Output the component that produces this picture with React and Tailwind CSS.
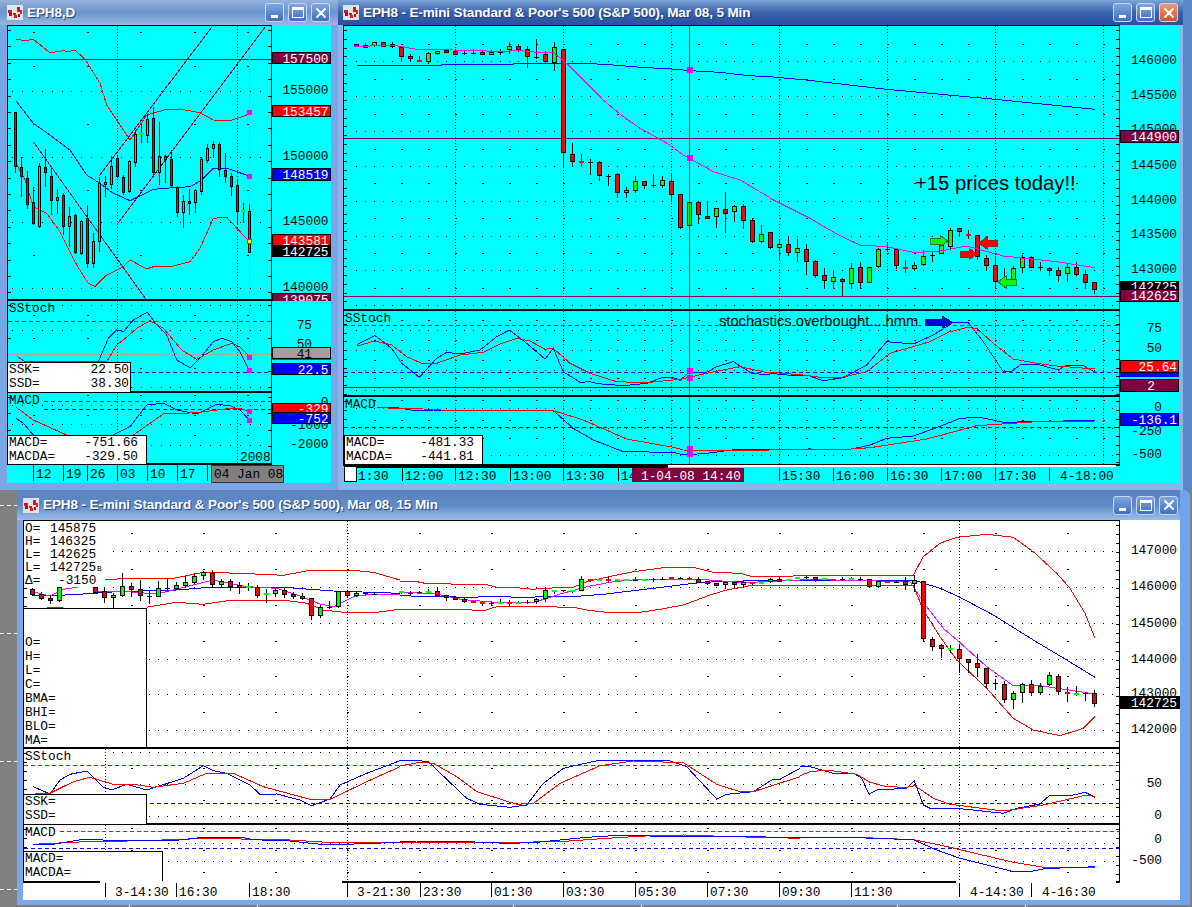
import React from "react";
import { X } from "lucide-react";

const MONO = "'Liberation Mono', monospace";
const SANS = "'Liberation Sans', Arial, sans-serif";
const BURG = "#800040";
const RED = "#ff0000";
const BLUE = "#0000ff";
const PINK = "#ff00ff";

const pts = (ox, oy, a) => {
  const out = [];
  for (let i = 0; i < a.length; i += 2) out.push(`${(ox + a[i] / 3).toFixed(1)},${(oy + a[i + 1] / 3).toFixed(1)}`);
  return out.join(" ");
};
const L = ({ c, p }) => <polyline points={p} fill="none" stroke={c} strokeWidth="1" />;
const T = ({ x, y, children, s = 12.8, c = "#000", a = "start", f = MONO }) => (
  <text x={x} y={y} fontFamily={f} fontSize={s} fill={c} textAnchor={a}>{children}</text>
);
const PB = ({ x, w, y, h, bg, c = "#fff", r, t }) => (
  <g>
    <rect x={x + 0.5} y={y + 0.5} width={w - 1} height={h - 1} fill={bg} stroke="#000" />
    <T x={r} y={y + h / 2 + 4.5} c={c} a="end">{t}</T>
  </g>
);

function Grid({ x0, x1, y0, y1, rows = [], dashes = [], dashStep = 27, dashOx = 0, step = 9, ox = 0, vs = [], tick = 0 }) {
  let d = "";
  rows.forEach((y) => {
    for (let x = ox || x0 + 4; x < x1 - 3; x += step) d += `M${x} ${y + 0.5}h1`;
  });
  dashes.forEach((y) => {
    for (let x = dashOx; x < x1 - 3; x += dashStep) if (x >= x0) d += `M${Math.round(x)} ${y + 0.5}h2`;
  });
  vs.forEach((x) => {
    for (let y = y0; y < y1; y += 3) d += `M${x + 0.5} ${y}v1`;
  });
  if (tick) {
    for (let y = y0 + 4; y < y1; y += tick) {
      const r = Math.round(y);
      d += `M${x0} ${r + 0.5}h3M${x1 - 3} ${r + 0.5}h3`;
    }
  }
  return <path d={d} stroke="#000" strokeWidth="1" fill="none" />;
}

function Candles({ ox, oy, data, w = 5 }) {
  const hw = Math.floor(w / 2);
  return (
    <g>
      {data.map((k, i) => {
        const kind = k[k.length - 1];
        const X = Math.round(ox + k[0] / 3);
        const Y = (v) => Math.round(oy + v / 3);
        if (kind === "p") {
          return (
            <g key={i}>
              <rect x={X} y={Y(k[1])} width="1" height={Y(k[3]) - Y(k[1])} fill="#000" />
              <rect x={X - 2} y={Y(k[2])} width="5" height="1" fill="#000" />
            </g>
          );
        }
        if (kind === "R" || kind === "G") {
          return (
            <g key={i}>
              <rect x={X} y={Y(k[1])} width="1" height={Y(k[3]) - Y(k[1])} fill="#000" />
              <rect x={X - 2} y={Y(k[2]) - 1} width="5" height="2" fill={kind === "R" ? RED : "#00ff00"} />
            </g>
          );
        }
        const fill = kind === "r" ? RED : kind === "g" ? "#00ff00" : "#666";
        return (
          <g key={i}>
            <rect x={X} y={Y(k[1])} width="1" height={Y(k[4]) - Y(k[1])} fill="#000" />
            <rect x={X - hw} y={Y(k[2])} width={w} height={Math.max(Y(k[3]) - Y(k[2]), 3)} fill="#000" />
            <rect x={X - hw + 1} y={Y(k[2]) + 1} width={w - 2} height={Math.max(Y(k[3]) - Y(k[2]) - 2, 1)} fill={fill} />
          </g>
        );
      })}
    </g>
  );
}

const Marker = ({ x, y, s = 6, c = PINK }) => <rect x={x - s / 2} y={y - s / 2} width={s} height={s} fill={c} />;

const Arrow = ({ x0, x1, y, c, e, right }) => {
  const hl = 8;
  const p = right
    ? `${x0},${y - 3} ${x1 - hl},${y - 3} ${x1 - hl},${y - 6} ${x1},${y} ${x1 - hl},${y + 6} ${x1 - hl},${y + 3} ${x0},${y + 3}`
    : `${x1},${y - 3} ${x0 + hl},${y - 3} ${x0 + hl},${y - 6} ${x0},${y} ${x0 + hl},${y + 6} ${x0 + hl},${y + 3} ${x1},${y + 3}`;
  return <polygon points={p} fill={c} stroke={e} strokeWidth="1" />;
};

function Pane({ x, y, w, h, axW, top, axis, children }) {
  const t = top ? 1 : 0;
  return (
    <div className="flex">
      <div className={top ? "border-x border-t border-b-2 border-black" : "border-x border-b-2 border-black"}>
        <svg className="block" width={w} height={h} viewBox={`${x} ${y} ${w} ${h}`} shapeRendering="crispEdges">
          {children}
        </svg>
      </div>
      <svg className="block" width={axW} height={h + t + 2} viewBox={`${x + w + 1} ${y - t} ${axW} ${h + t + 2}`} shapeRendering="crispEdges">
        {axis}
      </svg>
    </div>
  );
}

const AppIcon = () => (
  <svg width="16" height="15" viewBox="0 0 16 15" className="shrink-0 mr-[4px]" shapeRendering="crispEdges">
    <rect width="16" height="15" fill="#dfe3ea" />
    <rect x="1" y="5" width="4" height="3" fill="#d01818" />
    <rect x="2" y="8" width="3" height="3" fill="#a81010" />
    <rect x="6" y="8" width="3" height="2" fill="#d01818" />
    <rect x="7" y="10" width="3" height="3" fill="#e02020" />
    <rect x="10" y="2" width="3" height="5" fill="#d01818" />
    <rect x="13" y="5" width="2" height="4" fill="#e02020" />
    <rect x="11" y="9" width="2" height="3" fill="#a81010" />
  </svg>
);

const Btn = ({ className, children }) => (
  <div className={`w-[19px] h-[19px] rounded-[3px] border border-[#c8d8f4] flex items-center justify-center ${className}`}>{children}</div>
);

function Buttons({ close }) {
  const blue = "bg-linear-to-b from-[#7ea6e2] to-[#3f6fc0]";
  return (
    <div className="ml-auto flex gap-[4px]">
      <Btn className={blue}><span className="block w-[7px] h-[3px] bg-white mt-[8px]" /></Btn>
      <Btn className={blue}><span className="block w-[12px] h-[11px] border border-t-[3px] border-white" /></Btn>
      <Btn className={close}><X size={16} strokeWidth={3} color="#fff" /></Btn>
    </div>
  );
}

const Title = ({ className, text, close }) => (
  <div className={`flex items-center shrink-0 ${className}`}>
    <AppIcon />
    <span className="font-['Liberation_Sans',sans-serif] font-bold text-[13.5px] leading-none text-white tracking-[-0.12px] whitespace-nowrap [text-shadow:1px_1px_1px_#1a3a80]">{text}</span>
    <Buttons close={close} />
  </div>
);

const InfoRow = ({ a, b, pr }) => (
  <div className={`flex justify-between h-[14px] leading-[14px] ${pr}`}>
    <span>{a}</span>
    <span>{b}</span>
  </div>
);

const Box = ({ className, children }) => (
  <div className={`absolute bg-white border border-black border-b-0 font-['Liberation_Mono',monospace] text-[12.8px] text-black pl-[1px] ${className}`}>{children}</div>
);

/* ---------- daily window data ---------- */
const d1c = [
  [46,337,337,500,518,"r"],[64,470,502,530,590,"r"],[82,514,535,615,628,"r"],[100,560,606,673,675,"r"],[118,490,498,682,683,"g"],
  [136,448,502,520,560,"r"],[154,505,528,602,645,"r"],[172,568,592,602,642,"g"],[190,578,586,682,705,"r"],[208,620,648,680,740,"g"],
  [226,642,644,760,761,"r"],[244,660,663,763,765,"g"],[262,615,655,793,803,"r"],[280,700,724,793,803,"g"],[298,530,550,727,755,"g"],
  [316,528,546,554,590,"g"],[334,468,498,554,568,"g"],[352,468,475,530,535,"r"],[370,525,532,580,585,"r"],[388,480,484,577,580,"g"],
  [406,390,403,488,502,"g"],[424,375,403,430,"G"],[442,342,357,407,430,"g"],[460,320,354,518,530,"r"],[478,365,468,520,555,"g"],
  [496,465,469,480,550,"r"],[514,450,477,557,560,"r"],[532,558,560,640,650,"r"],[550,585,604,640,685,"g"],[568,568,603,610,645,"r"],
  [586,568,571,610,640,"g"],[604,472,478,575,585,"g"],[622,432,444,484,490,"g"],[640,424,432,446,475,"g"],[658,425,432,510,530,"r"],
  [676,460,510,530,548,"r"],[694,518,528,562,588,"r"],[712,538,555,635,675,"r"],[730,608,633,668,"G"],[748,612,634,758,760,"k"],
];

/* ---------- 5 min window data ---------- */
const m5a = [
  [49,132,133,140,142,"r"],[76,130,134,140,143,"r"],[103,126,127,139,140,"g"],[130,126,127,140,141,"r"],[157,127,133,140,143,"r"],
  [184,138,140,170,185,"r"],[211,163,168,176,185,"r"],[238,168,183,185,"R"],[265,155,160,185,192,"g"],[292,152,154,161,164,"g"],
  [319,148,149,155,156,"r"],[346,148,154,164,165,"r"],[373,150,160,165,"p"],[400,147,160,162,"p"],[427,150,155,160,163,"r"],
  [454,150,155,160,163,"g"],[481,148,156,165,"p"],[508,126,139,149,161,"g"],[535,133,139,150,155,"r"],[562,138,148,170,204,"r"],
  [589,117,170,178,"p"],[616,154,163,186,190,"r"],[643,126,142,190,212,"g"],[670,148,148,458,500,"r"],[697,430,463,485,500,"r"],
  [724,462,486,498,"R"],[751,477,487,524,"p"],[778,484,487,529,543,"r"],[805,522,527,558,"p"],[832,519,523,578,594,"r"],
  [859,562,571,578,594,"g"],[886,528,544,572,579,"g"],[913,544,544,557,567,"r"],[940,522,556,563,"p"],[967,528,541,557,563,"g"],
  [994,519,544,584,600,"r"],[1021,583,583,683,686,"r"],[1048,607,607,677,678,"g"],[1075,604,607,644,672,"r"],[1102,603,648,656,657,"r"],
  [1129,625,625,650,683,"g"],[1156,576,628,641,698,"r"],[1183,614,618,635,666,"g"],[1210,613,619,662,687,"r"],[1237,655,661,725,728,"r"],
  [1264,675,703,725,730,"g"],[1291,697,697,745,747,"r"],
];
const m5b = [
  [28,718,733,745,782,"g"],[55,712,733,760,768,"r"],[82,718,745,760,785,"g"],[109,733,748,785,825,"r"],[136,780,784,828,834,"r"],
  [163,805,826,844,866,"r"],[190,810,832,845,866,"g"],[217,835,838,847,888,"r"],[244,790,805,853,866,"g"],[271,785,802,848,866,"r"],
  [298,802,802,848,849,"g"],[325,745,748,802,803,"g"],[352,728,747,755,"p"],[379,745,748,797,808,"r"],[406,780,804,818,"R"],
  [433,785,796,806,812,"g"],[460,750,767,796,798,"g"],[487,755,765,785,"p"],[514,735,735,762,763,"g"],[541,685,691,740,748,"g"],
  [568,683,685,697,707,"r"],[595,690,705,718,"R"],[622,705,706,770,780,"r"],[649,765,775,797,810,"r"],[676,768,796,845,860,"r"],
  [703,805,840,845,850,"g"],[730,797,805,845,856,"g"],[757,765,770,805,818,"g"],[784,768,770,803,805,"r"],[811,785,802,812,"p"],
  [838,802,803,812,828,"r"],[865,800,810,827,845,"r"],[892,790,802,823,845,"g"],[919,785,802,826,828,"r"],[946,810,823,848,868,"r"],
  [973,846,847,869,882,"r"],
];

/* ---------- 15 min window data ---------- */
const q1 = [
  [97,295,297,315,318,"r"],[124,305,313,326,330,"r"],[151,315,323,332,342,"r"],[178,290,290,332,335,"g"],[286,292,292,308,310,"r"],
  [313,292,304,325,338,"r"],[340,310,316,325,355,"g"],[367,250,289,317,320,"g"],[394,280,289,300,320,"r"],[421,270,297,319,332,"r"],
  [448,300,318,342,"p"],[475,273,295,320,322,"g"],[502,267,295,305,"p"],[529,275,285,296,300,"g"],[556,258,277,289,290,"g"],
  [583,250,257,280,282,"g"],[610,243,246,259,270,"g"],[637,240,248,284,295,"r"],[664,267,274,284,292,"g"],[691,268,274,290,303,"r"],
  [718,275,286,292,312,"r"],[745,280,290,302,"G"],[772,285,292,318,323,"r"],[799,298,311,338,"G"],[826,293,301,311,322,"g"],
  [853,294,301,314,325,"r"],[880,305,311,320,328,"r"],[907,310,319,326,330,"r"],[934,323,325,377,390,"r"],[961,345,352,379,385,"g"],
  [988,333,350,358,"p"],[1015,303,304,352,353,"g"],[1042,300,304,317,325,"r"],[1069,305,310,317,320,"g"],[1096,307,310,316,"p"],[1123,305,311,316,"p"],
];
const q2 = [
  [4,212,217,222,"G"],[31,212,218,228,"p"],[58,212,216,222,"p"],[85,208,215,220,"G"],[112,205,214,229,230,"r"],[139,225,226,233,242,"r"],
  [166,228,231,238,240,"r"],[193,235,237,244,248,"r"],[220,240,245,250,"R"],[247,242,248,258,"R"],[274,243,250,258,"p"],[301,238,248,250,"G"],
  [328,240,248,257,"R"],[355,243,248,252,"G"],[382,240,245,252,"p"],[409,235,238,247,252,"g"],[436,205,211,238,245,"g"],[463,212,212,222,"G"],
  [490,210,211,215,"p"],[517,212,212,220,"G"],[544,168,178,212,214,"g"],[571,178,181,187,"R"],[598,178,180,182,"G"],[625,172,180,187,"R"],
  [652,178,180,182,"G"],[679,177,179,182,"G"],[706,170,179,183,"p"],[733,178,180,182,"G"],[760,173,176,185,"p"],[787,172,176,180,"p"],
  [814,170,173,176,"R"],[841,171,174,178,"p"],[868,172,176,179,"R"],[895,172,178,188,190,"r"],[922,183,184,190,195,"r"],[949,189,190,196,198,"r"],
  [976,185,187,193,207,"g"],[1003,185,187,193,205,"r"],[1030,185,187,193,200,"g"],[1057,186,188,195,"R"],[1084,186,188,192,"G"],
  [1111,175,178,187,190,"g"],[1138,170,178,185,187,"r"],[1165,178,180,184,"G"],[1192,172,174,176,"G"],
];
const q3 = [
  [18,168,172,178,"p"],[45,172,172,180,185,"r"],[72,174,176,179,"G"],[99,177,179,182,"R"],[126,170,178,182,"p"],[153,170,176,180,"G"],
  [180,172,178,182,"p"],[207,178,178,202,204,"r"],[234,184,184,200,205,"g"],[261,184,186,188,"R"],[288,180,185,190,"p"],[315,172,184,194,210,"r"],
  [342,165,181,193,215,"g"],[369,184,184,358,365,"r"],[396,352,358,380,392,"r"],[423,372,376,388,414,"r"],[450,376,386,398,"G"],
  [477,375,388,418,460,"r"],[504,418,418,428,458,"r"],[531,403,430,445,470,"r"],[558,443,445,491,505,"r"],[585,478,490,510,"p"],
  [612,483,493,541,550,"r"],[639,512,520,541,566,"g"],[666,488,493,520,550,"g"],[693,480,493,520,527,"r"],[720,490,499,520,525,"g"],
  [747,455,466,496,498,"g"],[774,462,469,517,522,"r"],[801,502,519,545,"R"],[828,498,521,527,"G"],[855,515,518,542,"p"],[882,510,520,553,560,"r"],
];

const ylab = (arr, r) => arr.map(([t, y]) => <T key={t} x={r} y={y + 4.5} a="end">{t}</T>);
const TimeTick = ({ x, y0, y1, t, ty, tx }) => (
  <g>
    <rect x={x} y={y0} width="1" height={y1 - y0} fill="#000" />
    <T x={tx ?? x + 3} y={ty}>{t}</T>
  </g>
);

function DailyWindow() {
  const x = 8, w = 263;
  return (
    <div className="absolute left-0 top-0 w-[338px] h-[490px] flex flex-col rounded-t-[6px] bg-[#7aa6e6]">
      <Title className="h-[25px] pl-[7px] pr-[8px] bg-linear-to-b from-[#94b2dc] via-[#6b93cc] to-[#9ab8e0]" text="EPH8,D" close="bg-linear-to-b from-[#7ea6e2] to-[#3f6fc0]" />
      <div className="ml-[7px] w-[324px] h-[458px] bg-[#00ffff] flex flex-col">
        <Pane x={x} y={26} w={w} h={273} axW={59} top axis={
          <g>
            {ylab([["155000", 89], ["150000", 155], ["145000", 220], ["140000", 286]], 328.5)}
            <PB x={272} w={59} y={52} h={12} bg={BURG} r={328.5} t="157500" />
            <PB x={272} w={59} y={105} h={12} bg={RED} r={328.5} t="153457" />
            <PB x={272} w={59} y={168} h={13} bg={BLUE} r={328.5} t="148519" />
            <PB x={272} w={59} y={234} h={12} bg={RED} r={328.5} t="143581" />
            <PB x={272} w={59} y={245} h={12} bg="#000" r={328.5} t="142725" />
            <PB x={272} w={59} y={293} h={12} bg={BURG} r={328.5} t="139075" />
          </g>
        }>
          <Grid x0={x} x1={x + w} y0={26} y1={299} rows={[91, 157, 222, 288]} dashes={[32, 66, 124, 190, 255]} dashStep={53.5} dashOx={33} step={9.9} ox={12} vs={[117, 237]} tick={16.4} />
          <rect x={x} y={59} width={w} height="1" fill={BURG} />
          <rect x="249" y="26" width="1" height="273" fill="#d08a9c" />
          <L c={BURG} p={pts(0, 0, [100, 425, 437, 897])} />
          <L c={BURG} p={pts(0, 0, [298, 527, 635, 82])} />
          <L c={BURG} p={pts(0, 0, [352, 672, 795, 82])} />
          <L c={RED} p={pts(0, 0, [48,118,75,122,100,118,150,158,190,152,205,155,225,150,255,178,300,250,320,315,350,360,390,420,440,345,500,328,540,327,600,338,640,360,690,362,740,345,748,338])} />
          <L c={BLUE} p={pts(0, 0, [48,303,100,370,150,405,210,450,260,525,300,550,340,580,390,602,460,568,520,563,570,560,605,540,640,505,680,505,748,528])} />
          <L c={RED} p={pts(0, 0, [48,490,75,540,100,620,140,640,180,695,230,795,265,850,285,860,320,825,370,800,390,780,440,807,460,800,520,798,570,785,600,745,640,655,680,652,748,725])} />
          <Candles ox={0} oy={0} data={d1c} w={3} />
          <Marker x={249} y={112} s={5} />
          <Marker x={249} y={176} s={5} />
          <Marker x={249} y={241} s={5} />
          <Marker x={249} y={241} s={3} c="#ffff00" />
        </Pane>
        <Pane x={x} y={301} w={w} h={90} axW={59} axis={
          <g>
            {ylab([["75", 324], ["50", 343]], 312)}
            <PB x={272} w={59} y={347} h={12} bg="#a0a0a0" c="#000" r={312} t="41" />
            <rect x="272" y="359" width="59" height="1" fill={RED} />
            <PB x={272} w={59} y={363} h={12} bg={BLUE} r={328.5} t="22.5" />
          </g>
        }>
          <Grid x0={x} x1={x + w} y0={301} y1={391} rows={[305, 330, 387]} dashes={[315, 338, 368]} dashStep={53.5} dashOx={33} step={9.9} ox={12} vs={[117, 237]} tick={16.4} />
          <rect x={x} y={354} width={w} height="1" fill="#a8a8a8" />
          <line x1={x} x2={x + w} y1="321.5" y2="321.5" stroke={RED} strokeDasharray="4 3" />
          <line x1="131" x2={x + w} y1="372.5" y2="372.5" stroke={BLUE} strokeDasharray="4 3" />
          <rect x="249" y="301" width="1" height="90" fill="#d08a9c" />
          <L c={BLUE} p={pts(0, 290, [295,215,325,145,350,120,370,125,400,90,442,67,470,105,500,135,530,210,570,233,600,205,640,155,665,145,695,155,720,185,748,242])} />
          <L c={RED} p={pts(0, 290, [50,198,75,215,320,215,350,165,370,150,410,115,450,92,490,115,545,180,590,208,640,180,695,160,720,170,748,200])} />
          <T x={9} y={312}>SStoch</T>
          <Marker x={249} y={357} s={5} />
          <Marker x={249} y={370} s={5} />
        </Pane>
        <Pane x={x} y={393} w={w} h={70} axW={59} axis={
          <g>
            {ylab([["0", 401], ["-1000", 424], ["-2000", 443]], 328.5)}
            <PB x={272} w={59} y={403} h={10} bg={RED} r={328.5} t="-329" />
            <PB x={272} w={59} y={412} h={12} bg={BLUE} r={328.5} t="-752" />
          </g>
        }>
          <Grid x0={x} x1={x + w} y0={393} y1={463} rows={[405, 424, 445]} dashes={[395, 415, 435]} dashStep={53.5} dashOx={33} step={9.9} ox={12} vs={[117, 237]} tick={16.4} />
          <line x1="44" x2={x + w} y1="401.5" y2="401.5" stroke={RED} strokeDasharray="4 3" />
          <line x1="44" x2={x + w} y1="409.5" y2="409.5" stroke={BLUE} strokeDasharray="4 3" />
          <rect x="249" y="393" width="1" height="70" fill="#d08a9c" />
          <L c={BLUE} p={pts(0, 290, [48,385,70,400,100,435,340,435,390,410,440,345,490,340,530,360,590,372,650,343,690,347,720,360,748,390])} />
          <L c={RED} p={pts(0, 290, [48,352,100,390,200,435,400,435,490,372,590,368,690,355,720,355,748,365])} />
          <T x={9} y={404}>MACD</T>
          <T x={240} y={461}>2008</T>
          <Marker x={249} y={411} s={5} />
          <Marker x={249} y={420} s={5} />
        </Pane>
        <svg className="block" width="324" height="18" viewBox="7 465 324 18" shapeRendering="crispEdges">
          {[[33,"12"],[63,"19"],[87,"26"],[117,"03"],[147,"10"],[177,"17"]].map(([tx, t]) => (
            <TimeTick key={t} x={tx} y0={465} y1={481} t={t} ty={477.5} />
          ))}
          <rect x="207" y="465" width="1" height="16" fill="#000" />
          <rect x="211.5" y="465.5" width="72" height="17" fill="#808080" stroke="#333" />
          <T x={214} y={477.5}>04 Jan 08</T>
        </svg>
      </div>
      <Box className="left-[7px] top-[362px] w-[124px] h-[30px]">
        <InfoRow a="SSK=" b="22.50" pr="pr-[1px]" />
        <InfoRow a="SSD=" b="38.30" pr="pr-[1px]" />
      </Box>
      <Box className="left-[7px] top-[435px] w-[140px] h-[29px]">
        <InfoRow a="MACD=" b="-751.66" pr="pr-[8px]" />
        <InfoRow a="MACDA=" b="-329.50" pr="pr-[8px]" />
      </Box>
    </div>
  );
}

function FiveMinWindow() {
  const x = 344, w = 775;
  const vs = [455, 563, 671, 779, 887, 995, 1103];
  return (
    <div className="absolute left-[338px] top-0 w-[854px] h-[490px] flex flex-col bg-[#8db4ea] border-r-[9px] border-r-[#5b86c8]">
      <Title className="h-[25px] pl-[5px] pr-[5px] bg-linear-to-b from-[#7ba4d8] via-[#3a63ad] to-[#2a4fa0]" text="EPH8 - E-mini Standard & Poor's 500 (S&P 500), Mar 08, 5 Min" close="bg-linear-to-b from-[#f09a70] to-[#d05028]" />
      <div className="ml-[5px] w-[836px] h-[458px] bg-[#00ffff] flex flex-col">
        <Pane x={x} y={26} w={w} h={283} axW={59} top axis={
          <g>
            {ylab([["146000", 59], ["145500", 94], ["145000", 128], ["144500", 164], ["144000", 199], ["143500", 233], ["143000", 268]], 1177)}
            <PB x={1120} w={59} y={130} h={13} bg={BURG} r={1177} t="144900" />
            <PB x={1120} w={59} y={281} h={10} bg="#000" r={1177} t="142725" />
            <PB x={1120} w={59} y={289} h={13} bg={BURG} r={1177} t="142625" />
          </g>
        }>
          <Grid x0={x} x1={x + w} y0={26} y1={309} rows={[61, 96, 131, 166, 201, 236, 270, 305]} dashes={[44, 79, 114, 149, 183, 218, 253, 288]} dashStep={27} dashOx={374} step={9} ox={356} vs={vs} tick={8.75} />
          <rect x={x} y={138} width={w} height="1" fill={BURG} />
          <rect x={x} y={296} width={w} height="1" fill={BURG} />
          <L c={BLUE} p={pts(340, 0, [52,196,305,196,305,193,520,193,520,190,770,192,820,195,900,202,1010,208,1050,212,1140,217,1225,227,1290,230])} />
          <L c={BLUE} p={pts(770, 0, [0,230,108,240,350,268,675,298,975,328])} />
          <Candles ox={340} oy={0} data={m5a} />
          <Candles ox={770} oy={0} data={m5b} />
          <L c={PINK} p={pts(340, 0, [42,140,160,135,195,142,230,148,340,150,415,152,495,155,525,150,600,158,640,158,680,190,740,250,790,300,850,350,900,385,990,435,1030,465,1048,475,1120,515,1200,540,1290,593])} />
          <L c={PINK} p={pts(770, 0, [0,595,120,655,170,685,220,712,270,735,350,740,430,757,500,755,590,738,700,768,860,785,975,803])} />
          <Marker x={689.5} y={70} />
          <Marker x={689.5} y={158} />
          <rect x="689" y="26" width="1" height="283" fill={BURG} />
          <Arrow x0={930} x1={948} y={241} c="#00ff00" e="#1a7a30" right />
          <Arrow x0={979} x1={997} y={243} c={RED} e="#a02020" />
          <Arrow x0={960} x1={977} y={254} c={RED} e="#a02020" right />
          <Arrow x0={998} x1={1016} y={282} c="#00ff00" e="#1a7a30" />
          <T x={915} y={190} s={20.3} f={SANS}>+15 prices today!!</T>
        </Pane>
        <Pane x={x} y={311} w={w} h={84} axW={59} axis={
          <g>
            {ylab([["75", 327], ["50", 347]], 1162)}
            <rect x="1120" y="372" width="59" height="5" fill={BLUE} />
            <PB x={1120} w={59} y={360} h={13} bg={RED} r={1177} t="25.64" />
            <PB x={1120} w={59} y={379} h={13} bg={BURG} r={1155} t="2" />
          </g>
        }>
          <Grid x0={x} x1={x + w} y0={311} y1={395} rows={[330, 350, 370, 390]} dashes={[320, 340, 360, 378]} dashStep={27} dashOx={374} step={9} ox={356} vs={vs} tick={8.75} />
          <line x1={x} x2={x + w} y1="325.5" y2="325.5" stroke={RED} strokeDasharray="4 3" />
          <line x1={x} x2={x + w} y1="372.5" y2="372.5" stroke={BLUE} strokeDasharray="4 3" />
          <rect x={x} y={387} width={w} height="1" fill={BURG} />
          <L c={BLUE} p={pts(340, 295, [52,148,105,122,155,160,185,205,238,247,290,190,320,172,360,177,420,165,470,125,508,105,560,145,615,192,640,160,670,230,720,262,750,260,775,266,850,272,920,265,965,248,995,246,1020,256,1048,232,1100,232,1130,215,1180,200,1235,235,1290,240])} />
          <L c={RED} p={pts(340, 295, [52,153,105,138,155,150,200,185,250,207,290,205,360,180,430,172,480,147,530,130,570,138,615,163,640,160,690,205,750,235,830,260,920,263,1020,253,1100,235,1200,215,1290,235])} />
          <L c={BLUE} p={pts(770, 295, [0,235,50,240,110,240,160,257,220,248,290,210,350,140,430,147,490,120,550,82,595,83,640,140,700,230,725,228,755,207,810,210,865,225,890,210,940,212,975,232])} />
          <L c={RED} p={pts(770, 295, [0,232,100,240,160,248,210,248,290,230,360,175,480,140,540,110,590,98,620,100,670,145,730,192,800,205,860,213,975,222])} />
          <Marker x={689.5} y={371} />
          <Marker x={689.5} y={378} />
          <rect x="689" y="311" width="1" height="84" fill={BURG} />
          <T x={345} y={322}>SStoch</T>
          <T x={719} y={326} s={14.7} f={SANS}>stochastics overbought....hmm</T>
          <polygon points="925,319 942,319 942,316 952,322 942,328 942,325 925,325" fill="#0000d0" stroke="#00008a" />
        </Pane>
        <Pane x={x} y={397} w={w} h={67} axW={59} axis={
          <g>
            {ylab([["0", 406], ["-250", 430], ["-500", 453]], 1162)}
            <PB x={1120} w={59} y={413} h={13} bg={BLUE} r={1177} t="-136.1" />
          </g>
        }>
          <Grid x0={x} x1={x + w} y0={397} y1={464} rows={[408, 428, 455]} dashes={[400, 420, 438]} dashStep={27} dashOx={374} step={9} ox={356} vs={vs} tick={8.75} />
          <line x1={x} x2={x + w} y1="427.5" y2="427.5" stroke={BLUE} strokeDasharray="4 3" />
          <L c={BLUE} p={pts(340, 295, [110,338,170,338,230,348,280,345,340,347,640,347,700,400,760,435,850,470,1000,472,1030,480,1100,475,1200,462,1290,462])} />
          <L c={RED} p={pts(340, 295, [110,338,250,342,340,347,640,347,730,375,860,432,1000,457,1030,465,1140,468,1290,465])} />
          <L c={BLUE} p={pts(770, 295, [0,463,120,462,230,465,300,450,350,430,430,423,500,398,570,370,630,367,700,382,975,376])} />
          <L c={RED} p={pts(770, 295, [0,463,200,465,300,458,470,432,620,392,800,380,975,378])} />
          <Marker x={689.5} y={449} />
          <Marker x={689.5} y={454} />
          <rect x="689" y="397" width="1" height="67" fill={BURG} />
          <T x={345} y={408}>MACD</T>
        </Pane>
        <svg className="block" width="836" height="17" viewBox="343 466 836 17" shapeRendering="crispEdges">
          <rect x="344" y="466" width="324" height="2" fill="#000" />
          {[[402,"12:00"],[455,"12:30"],[510,"13:00"],[563,"13:30"],[779,"15:30"],[833,"16:00"],[887,"16:30"],[941,"17:00"],[995,"17:30"]].map(([tx, t]) => (
            <TimeTick key={t} x={tx} y0={468} y1={481} t={t} ty={479.5} />
          ))}
          <rect x="618" y="468" width="1" height="13" fill="#000" />
          <T x={621} y={479.5}>14</T>
          <rect x="1049" y="468" width="1" height="13" fill="#000" />
          <T x={1060} y={479.5}>4-18:00</T>
          <T x={358} y={479.5}>1:30</T>
          <rect x="632" y="468" width="112" height="14" fill={BURG} />
          <T x={641} y={479.5} c="#fff">1-04-08 14:40</T>
          <rect x="344.5" y="466.5" width="12" height="15" fill="#fff" stroke="#000" />
        </svg>
      </div>
      <Box className="left-[6px] top-[435px] w-[139px] h-[29px]">
        <InfoRow a="MACD=" b="-481.33" pr="pr-[8px]" />
        <InfoRow a="MACDA=" b="-441.81" pr="pr-[8px]" />
      </Box>
      <div className="absolute left-[330px] top-[465px] w-[448px] h-[2px] bg-white" />
    </div>
  );
}

function FifteenMinWindow() {
  const x = 24, w = 1095;
  return (
    <div className="absolute left-[17px] top-[490px] w-[1173px] h-[415px] flex flex-col rounded-t-[6px] bg-[#7aa8ea] border-r-[10px] border-r-[#6fa5ea]">
      <Title className="h-[30px] pl-[6px] pr-[2px] bg-linear-to-b from-[#5a82be] via-[#5f8ac6] to-[#9bbce8]" text="EPH8 - E-mini Standard & Poor's 500 (S&P 500), Mar 08, 15 Min" close="bg-linear-to-b from-[#7ea6e2] to-[#3f6fc0]" />
      <div className="ml-[6px] w-[1157px] h-[380px] bg-white flex flex-col">
        <Pane x={x} y={521} w={w} h={226} axW={60} top axis={
          <g>
            {ylab([["147000", 549], ["146000", 585], ["145000", 622], ["144000", 658], ["143000", 692], ["142000", 728]], 1177)}
            <PB x={1120} w={60} y={696} h={13} bg="#000" r={1177} t="142725" />
          </g>
        }>
          <Grid x0={x} x1={x + w} y0={521} y1={747} rows={[551, 587, 623, 659, 694, 730]} dashes={[533, 569, 605, 641, 676, 712]} dashStep={72} dashOx={131} step={9} ox={113} vs={[347, 959]} tick={9} />
          <L c={RED} p={pts(0, 490, [315,270,350,267,520,265,610,247,720,250,850,256,935,240,1050,240,1120,247,1200,270])} />
          <L c={RED} p={pts(400, 520, [0,184,45,184,75,190,150,190,155,193,255,193,290,202,340,202,400,208,430,205,520,202,560,185,650,165,700,155,800,142,880,142,940,157,1020,160,1050,168,1180,168,1200,165])} />
          <L c={RED} p={pts(800, 520, [0,165,340,165,370,110,420,70,470,52,560,43,640,52,700,95,770,160,810,205,855,280,885,355])} />
          <L c={RED} p={pts(0, 490, [140,352,190,352])} />
          <L c={RED} p={pts(0, 490, [440,352,530,337,610,343,700,330,850,330,920,340,970,360,1030,367,1130,367,1200,358])} />
          <L c={RED} p={pts(400, 520, [0,268,180,268,250,272,290,260,420,260,520,262,560,270,620,277,720,277,780,268,850,255,930,225,980,210,1050,197,1200,197])} />
          <L c={RED} p={pts(800, 520, [0,197,340,197,370,270,420,350,470,420,560,505,640,595,700,630,780,647,850,625,885,590])} />
          <L c={BLUE} p={pts(0, 490, [100,316,180,316,250,312,350,305,530,300,630,292,850,292,1000,303,1200,310])} />
          <L c={BLUE} p={pts(400, 520, [0,226,45,229,150,229,180,233,290,229,350,232,530,229,610,223,760,205,880,190,960,184,1200,181])} />
          <L c={BLUE} p={pts(800, 520, [0,180,340,180,420,205,480,232,580,285,700,360,800,420,885,472])} />
          <L c={PINK} p={pts(0, 490, [97,305,150,318,190,298,230,292])} />
          <L c={PINK} p={pts(0, 490, [290,305,340,305,380,305,470,312,560,290,640,270,740,290,830,295,905,320,960,342,1000,350,1060,320,1120,312,1200,312])} />
          <L c={PINK} p={pts(400, 520, [0,218,100,220,180,238,300,248,400,248,470,225,560,200,640,185,720,178,900,178,1030,188,1200,180])} />
          <L c={PINK} p={pts(800, 520, [0,178,330,185,380,260,430,325,480,368,560,440,640,497,720,497,885,522])} />
          <Candles ox={0} oy={490} data={q1} />
          <Candles ox={400} oy={520} data={q2} />
          <Candles ox={800} oy={520} data={q3} />
          <rect x="24" y="521" width="76" height="63" fill="#fff" />
          {[["O=","145875",532],["H=","146325",545],["L=","142625",558],["L=","142725",571]].map(([a, b, y]) => (
            <g key={y}>
              <T x={25} y={y}>{a}</T>
              <T x={50} y={y}>{b}</T>
            </g>
          ))}
          <text x={97} y={571} fontFamily={MONO} fontSize="8" fill="#000">B</text>
          <T x={25} y={584}>Δ=</T>
          <T x={58} y={584}>-3150</T>
        </Pane>
        <Pane x={x} y={749} w={w} h={74} axW={60} axis={ylab([["50", 782], ["0", 814]], 1162)}>
          <Grid x0={x} x1={x + w} y0={749} y1={823} rows={[752, 784, 816]} dashes={[768, 800]} dashStep={72} dashOx={131} step={9} ox={113} vs={[105, 347, 959]} tick={9} />
          <line x1={x} x2={x + w} y1="765.5" y2="765.5" stroke={RED} strokeDasharray="4 3" />
          <line x1="150" x2={x + w} y1="803.5" y2="803.5" stroke={BLUE} strokeDasharray="4 3" />
          <L c={BLUE} p={pts(0, 745, [100,125,150,147,180,105,210,88,260,78,310,127,335,135,380,118,440,135,550,100,610,62,640,77,680,85,750,120,780,148,830,147,900,165,935,182,990,162,1020,120,1100,85,1200,47])} />
          <L c={RED} p={pts(0, 745, [105,147,150,145,220,110,270,97,340,118,400,118,460,127,550,115,620,85,700,85,790,125,930,163,990,163,1100,110,1200,65])} />
          <L c={BLUE} p={pts(400, 745, [0,45,40,45,85,50,200,160,240,178,330,187,380,180,430,115,490,70,600,45,800,45,860,65,950,162,980,148,1060,140,1115,105,1140,103,1200,70])} />
          <L c={RED} p={pts(400, 745, [0,63,60,52,100,55,170,95,230,140,350,178,400,175,480,115,600,62,700,48,850,53,950,118,1020,140,1060,140,1200,95])} />
          <L c={BLUE} p={pts(800, 745, [0,65,30,65,100,85,165,87,185,100,207,148,230,135,320,130,343,108,370,180,395,192,470,190,610,205,650,190,720,177,750,150,820,150,855,142,885,157])} />
          <L c={RED} p={pts(800, 745, [0,92,30,80,80,75,170,88,210,112,260,125,320,127,345,122,400,160,450,178,610,198,730,180,860,150,885,155])} />
          <T x={25} y={760}>SStoch</T>
        </Pane>
        <Pane x={x} y={825} w={w} h={56} axW={60} axis={ylab([["0", 838], ["-500", 859]], 1162)}>
          <Grid x0={x} x1={x + w} y0={825} y1={881} rows={[843, 861]} dashes={[828, 850, 872]} dashStep={72} dashOx={131} step={9} ox={168} vs={[105, 347, 959]} tick={9} />
          <line x1="60" x2={x + w} y1="831.5" y2="831.5" stroke={RED} strokeDasharray="4 3" />
          <line x1={x} x2={x + w} y1="848.5" y2="848.5" stroke={BLUE} strokeDasharray="4 3" />
          <L c={RED} p={pts(0, 745, [100,298,220,292,300,288,380,288,520,284,620,280,870,285,980,292,1200,292])} />
          <L c={BLUE} p={pts(0, 745, [100,298,160,298,250,283,300,283,320,287,520,287,600,278,730,278,760,284,870,288,980,300,1200,292])} />
          <L c={RED} p={pts(400, 745, [0,292,320,292,480,290,620,280,750,272,850,270,1000,275,1200,280])} />
          <L c={BLUE} p={pts(400, 745, [0,290,50,288,150,288,320,295,400,293,560,277,640,272,1200,277])} />
          <L c={RED} p={pts(800, 745, [0,277,170,277,340,284,420,300,640,352,740,368,885,367])} />
          <L c={BLUE} p={pts(800, 745, [0,277,170,278,340,284,410,315,480,340,640,380,690,380,740,370,820,368,885,365])} />
          <T x={25} y={836}>MACD</T>
        </Pane>
        <svg className="block" width="1157" height="17" viewBox="23 883 1157 17" shapeRendering="crispEdges">
          {[[105,"3-14:30",115],[176,"16:30"],[249,"18:30"],[347,"3-21:30",357],[420,"23:30"],[491,"01:30"],[563,"03:30"],[635,"05:30"],[707,"07:30"],[779,"09:30"],[851,"11:30"],[959,"4-14:30",970],[1031,"4-16:30",1042]].map(([tx, t, lx]) => (
            <TimeTick key={t} x={tx} y0={883} y1={897} t={t} ty={895.5} tx={lx} />
          ))}
        </svg>
      </div>
      <Box className="left-[6px] top-[118px] w-[124px] h-[139px] pt-[27px]">
        {["O=", "H=", "L=", "C=", "BMA=", "BHI=", "BLO=", "MA="].map((t) => (
          <div key={t} className="h-[14px] leading-[14px]">{t}</div>
        ))}
      </Box>
      <Box className="left-[6px] top-[304px] w-[124px] h-[30px]">
        <InfoRow a="SSK=" b="" pr="pr-[1px]" />
        <InfoRow a="SSD=" b="" pr="pr-[1px]" />
      </Box>
      <Box className="left-[6px] top-[361px] w-[140px] h-[30px]">
        <InfoRow a="MACD=" b="" pr="pr-[1px]" />
        <InfoRow a="MACDA=" b="" pr="pr-[1px]" />
      </Box>
      <div className="absolute left-[83px] top-[391px] w-[242px] h-[2px] bg-white" />
      <div className="absolute left-[939px] top-[391px] w-[160px] h-[2px] bg-white" />
    </div>
  );
}

export default function App() {
  return (
    <div className="relative w-[1192px] h-[907px] overflow-hidden bg-[#808080]">
      <svg className="absolute left-0 top-0" width="1192" height="907" shapeRendering="crispEdges">
        <path d="M0 505.5H17M0 633.5H17M0 761.5H17M0 889.5H17" stroke="#fff" strokeDasharray="4 3" fill="none" />
        <path d="M129.5 905V907M257.5 905V907M513.5 905V907M641.5 905V907M897.5 905V907M1025.5 905V907" stroke="#fff" fill="none" />
      </svg>
      <DailyWindow />
      <FiveMinWindow />
      <FifteenMinWindow />
    </div>
  );
}
